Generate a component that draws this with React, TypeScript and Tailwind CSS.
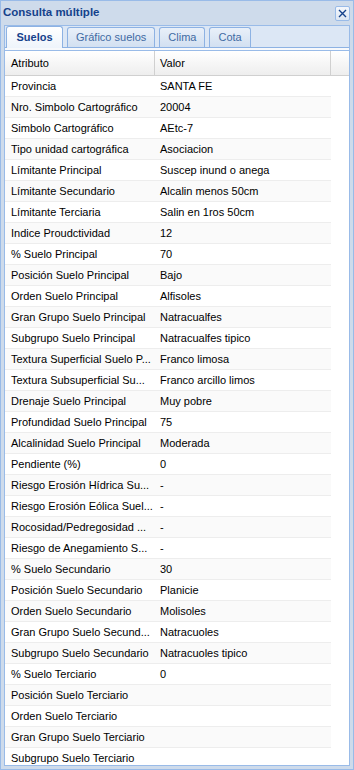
import React from 'react';

type Row = { attr: string; value: string };

// los atributos largos se muestran recortados, como en la grilla original
const rows: Row[] = [
  { attr: 'Provincia', value: 'SANTA FE' },
  { attr: 'Nro. Simbolo Cartográfico', value: '20004' },
  { attr: 'Simbolo Cartográfico', value: 'AEtc-7' },
  { attr: 'Tipo unidad cartográfica', value: 'Asociacion' },
  { attr: 'Límitante Principal', value: 'Suscep inund o anega' },
  { attr: 'Límitante Secundario', value: 'Alcalin menos 50cm' },
  { attr: 'Límitante Terciaria', value: 'Salin en 1ros 50cm' },
  { attr: 'Indice Proudctividad', value: '12' },
  { attr: '% Suelo Principal', value: '70' },
  { attr: 'Posición Suelo Principal', value: 'Bajo' },
  { attr: 'Orden Suelo Principal', value: 'Alfisoles' },
  { attr: 'Gran Grupo Suelo Principal', value: 'Natracualfes' },
  { attr: 'Subgrupo Suelo Principal', value: 'Natracualfes tipico' },
  { attr: 'Textura Superficial Suelo P...', value: 'Franco limosa' },
  { attr: 'Textura Subsuperficial Su...', value: 'Franco arcillo limos' },
  { attr: 'Drenaje Suelo Principal', value: 'Muy pobre' },
  { attr: 'Profundidad Suelo Principal', value: '75' },
  { attr: 'Alcalinidad Suelo Principal', value: 'Moderada' },
  { attr: 'Pendiente (%)', value: '0' },
  { attr: 'Riesgo Erosión Hídrica Su...', value: '-' },
  { attr: 'Riesgo Erosión Eólica Suel...', value: '-' },
  { attr: 'Rocosidad/Pedregosidad ...', value: '-' },
  { attr: 'Riesgo de Anegamiento S...', value: '-' },
  { attr: '% Suelo Secundario', value: '30' },
  { attr: 'Posición Suelo Secundario', value: 'Planicie' },
  { attr: 'Orden Suelo Secundario', value: 'Molisoles' },
  { attr: 'Gran Grupo Suelo Secund...', value: 'Natracuoles' },
  { attr: 'Subgrupo Suelo Secundario', value: 'Natracuoles tipico' },
  { attr: '% Suelo Terciario', value: '0' },
  { attr: 'Posición Suelo Terciario', value: '' },
  { attr: 'Orden Suelo Terciario', value: '' },
  { attr: 'Gran Grupo Suelo Terciario', value: '' },
  { attr: 'Subgrupo Suelo Terciario', value: '' },
];

const tabs = ['Suelos', 'Gráfico suelos', 'Clima', 'Cota'];

const App: React.FC = () => {
  return (
    <div
      className="w-[354px] h-[770px] flex flex-col bg-[#cedbeb] border border-[#99bbe8] px-[3px] pb-[3px] overflow-hidden text-[11px] text-black"
      style={{ fontFamily: '"Liberation Sans", Arial, sans-serif' }}
    >
      {/* title bar */}
      <div className="h-[24px] shrink-0 flex items-center justify-between">
        <span className="font-bold text-[#15428b] text-[11.5px] -ml-[1px]">Consulta múltiple</span>
        <div className="w-[15px] h-[15px] flex items-center justify-center rounded-[2px] border border-[#99bbe8] bg-gradient-to-b from-[#f5f8fc] to-[#dce6f3]">
          <svg width="9" height="9" viewBox="0 0 9 9">
            <path d="M1 1 L8 8 M8 1 L1 8" stroke="#15428b" strokeWidth="1.4" />
          </svg>
        </div>
      </div>

      {/* tab panel */}
      <div className="flex-1 flex flex-col min-h-0 border border-[#99bbe8] bg-white">
        <div className="h-[22px] shrink-0 flex items-end gap-[4px] pl-[1px] bg-[#dce7f5] border-b border-[#8db2e3]">
          {tabs.map((t, i) =>
            i === 0 ? (
              <div
                key={t}
                className="h-[22px] -mb-[1px] w-[57px] justify-center flex items-center rounded-t-[3px] border border-b-0 border-[#8db2e3] bg-gradient-to-b from-white to-[#eef4fb] font-bold text-[#15428b]"
              >
                {t}
              </div>
            ) : (
              <div
                key={t}
                className="h-[20px] px-[8px] flex items-center rounded-t-[3px] border border-b-0 border-[#8db2e3] bg-gradient-to-b from-[#e9f0f9] to-[#d2e0f1] text-[#416aa3]"
              >
                {t}
              </div>
            )
          )}
        </div>
        <div className="h-[3px] shrink-0 bg-[#f7f9fc] border-b border-[#99bbe8]" />

        {/* grid */}
        <div className="flex-1 min-h-0 overflow-hidden">
          <div className="h-[25px] flex bg-gradient-to-b from-white to-[#eeeeee] border-b border-[#d0d0d0]">
            <div className="w-[150px] shrink-0 pl-[6px] flex items-center border-r border-[#d0d0d0]">Atributo</div>
            <div className="w-[176px] shrink-0 pl-[5px] flex items-center border-r border-[#d0d0d0]">Valor</div>
            <div className="flex-1" />
          </div>
          {rows.map((r, i) => (
            <div
              key={r.attr}
              className={`w-[326px] h-[21px] flex items-center border-b border-[#ededed] ${
                i % 2 === 1 ? 'bg-[#fafafa]' : 'bg-white'
              }`}
            >
              <div className="w-[150px] shrink-0 pl-[6px] whitespace-nowrap overflow-hidden">{r.attr}</div>
              <div className="w-[176px] shrink-0 pl-[5px] pr-[3px] truncate">{r.value}</div>
            </div>
          ))}
        </div>
      </div>
    </div>
  );
};

export default App;
